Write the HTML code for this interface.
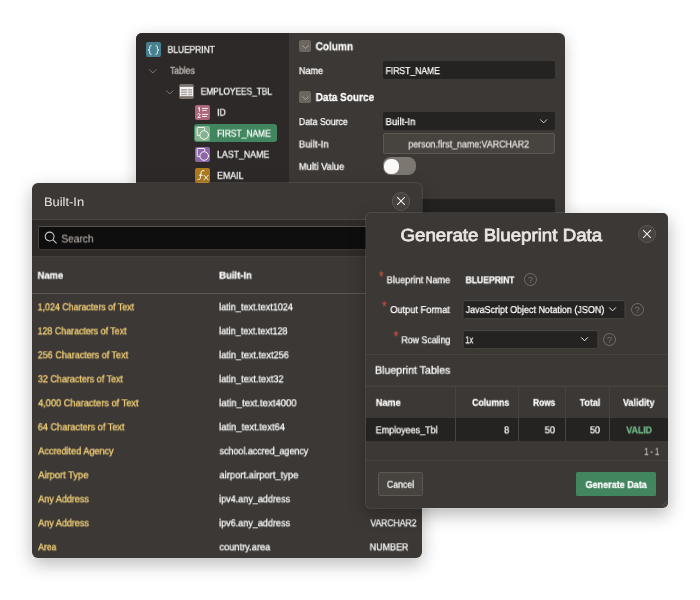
<!DOCTYPE html>
<html lang="en"><head><meta charset="utf-8"><title>Blueprint</title>
<style>
html,body{margin:0;padding:0;background:#fff;}
body{width:700px;height:600px;overflow:hidden;font-family:"Liberation Sans",sans-serif;}
#stage{position:relative;width:700px;height:600px;overflow:hidden;background:#fff;}
#stage *{box-sizing:border-box;}
.t{-webkit-text-stroke-color:currentColor;position:absolute;will-change:transform;text-rendering:geometricPrecision;white-space:nowrap;line-height:20px;height:20px;transform-origin:0 0;font-family:"Liberation Sans",sans-serif;}
.a{position:absolute;}
.panel{position:absolute;background:#3c3835;border-radius:6px;}
#back{left:136px;top:33px;width:429px;height:300px;box-shadow:0 4px 16px rgba(0,0,0,.22);}
#bi{left:32px;top:183px;width:390px;height:374.5px;box-shadow:0 0 0 1px rgba(255,255,255,.10),0 6px 18px rgba(0,0,0,.28);}
#gen{border-radius:5px;left:366px;top:213px;width:302.3px;height:295px;box-shadow:0 0 0 1px rgba(255,255,255,.11),0 6px 18px rgba(0,0,0,.30);}
svg{position:absolute;overflow:visible;}
.f{will-change:transform;}

</style></head>
<body>
<div id="stage">
<div class="panel" id="back"></div>
<div class="a" style="left:136px;top:33px;width:153px;height:300px;background:#2d2928;border-radius:6px 0 0 6px;"></div>
<!-- tree icons -->
<div class="a" style="left:146px;top:42px;width:15px;height:15px;background:#47808f;border-radius:2px;"></div>
<svg style="left:146px;top:42px" width="15" height="15" viewBox="0 0 15 15" fill="none" stroke="#fff" stroke-width="0.95" stroke-linecap="round" stroke-linejoin="round"><path d="M5.2 3.7 C3.9 3.7 3.7 4.2 3.7 5 V6.6 C3.7 7.4 3.2 7.9 2.2 8 C3.2 8.1 3.7 8.6 3.7 9.4 V11 C3.7 11.8 3.9 12.3 5.2 12.3"/><path d="M9.9 3.7 C11.2 3.7 11.4 4.2 11.4 5 V6.6 C11.4 7.4 11.9 7.9 12.9 8 C11.9 8.1 11.4 8.6 11.4 9.4 V11 C11.4 11.8 11.2 12.3 9.9 12.3"/></svg>
<svg style="left:149px;top:68.5px" width="8" height="5" viewBox="0 0 8 5" fill="none" stroke="#7f7a76" stroke-width="1"><path d="M0.3 0.5 L3.8 4 L7.3 0.5"/></svg>
<svg style="left:165.5px;top:89.5px" width="8" height="5" viewBox="0 0 8 5" fill="none" stroke="#7f7a76" stroke-width="1"><path d="M0.3 0.5 L3.8 4 L7.3 0.5"/></svg>
<div class="a" style="left:179px;top:84px;width:15px;height:15px;background:#7a726d;border-radius:2px;"></div>
<svg style="left:179px;top:84px" width="15" height="15" viewBox="0 0 15 15" fill="none" stroke="#fbf9f7" stroke-width="0.9"><rect x="1.5" y="3.3" width="12" height="8.4" fill="rgba(255,255,255,0.38)"/><path d="M1.5 4.1 H13.5" stroke-width="1.7"/><path d="M1.5 7 H13.5 M1.5 9.4 H13.5 M8.6 4.5 V11.7" stroke-width="0.8"/></svg>
<div class="a" style="left:195px;top:105px;width:15px;height:15px;background:#ab667a;border-radius:2px;"></div>
<svg style="left:195px;top:105px" width="15" height="15" viewBox="0 0 15 15" fill="none" stroke="#fff" stroke-width="0.9"><path d="M7.1 3.4 H13.1 M7.1 5.4 H11.8 M7.1 9.4 H13.1 M7.1 11.5 H11.8"/><path d="M2.9 3.3 L4.4 2.4 V6.6" stroke-width="0.95"/><path d="M2.5 9.6 C2.7 8.4 5.3 8.3 5.2 9.8 C5.1 10.8 3.4 11.4 2.6 12.5 H5.6" stroke-width="0.85"/></svg>
<div class="a" style="left:194px;top:124px;width:83px;height:18px;background:#42865f;border-radius:3px;"></div>
<div class="a" style="left:195px;top:126px;width:15px;height:15px;background:#86b292;border-radius:2px;"></div>
<svg style="left:195px;top:126px" width="15" height="15" viewBox="0 0 15 15" fill="none" stroke="#fff" stroke-width="0.9" stroke-linecap="round"><path d="M4.4 9.6 H2.9 Q2.2 9.6 2.2 8.9 V2.2 Q2.2 1.5 2.9 1.5 H9 Q9.7 1.5 9.7 2.2 V3.6"/><circle cx="9.2" cy="9" r="4.3"/></svg>
<div class="a" style="left:195px;top:147px;width:15px;height:15px;background:#8d66a7;border-radius:2px;"></div>
<svg style="left:195px;top:147px" width="15" height="15" viewBox="0 0 15 15" fill="none" stroke="#fff" stroke-width="0.9" stroke-linecap="round"><path d="M4.4 9.6 H2.9 Q2.2 9.6 2.2 8.9 V2.2 Q2.2 1.5 2.9 1.5 H9 Q9.7 1.5 9.7 2.2 V3.6"/><circle cx="9.2" cy="9" r="4.3"/></svg>
<div class="a" style="left:195px;top:168px;width:15px;height:15px;background:#ad7b1d;border-radius:2px;"></div>
<svg style="left:195px;top:168px" width="15" height="15" viewBox="0 0 15 15" fill="none" stroke="#fff" stroke-width="0.95" stroke-linecap="round"><path d="M9 2.7 C7.2 2.1 6.4 3 6.1 4.6 L5.3 10 C5.1 11.3 4.4 11.9 2.8 11.4"/><path d="M4.3 7.2 H7.3"/><path d="M9 7.3 L13.2 11.9 M13.2 7.3 L9 11.9"/></svg>
<!-- property editor -->
<div class="a" style="left:299px;top:40px;width:12px;height:12px;background:#6c6661;border-radius:2px;"></div>
<svg style="left:301.6px;top:44.6px" width="7" height="4" viewBox="0 0 7 4" fill="none" stroke="#aba7a3" stroke-width="0.9"><path d="M0.3 0.4 L3.5 3.5 L6.7 0.4"/></svg>
<div class="a" style="left:299px;top:91px;width:12px;height:12px;background:#6c6661;border-radius:2px;"></div>
<svg style="left:301.6px;top:95.6px" width="7" height="4" viewBox="0 0 7 4" fill="none" stroke="#aba7a3" stroke-width="0.9"><path d="M0.3 0.4 L3.5 3.5 L6.7 0.4"/></svg>
<div class="a" style="left:383px;top:61px;width:172px;height:18px;background:#252321;border-radius:2px;"></div>
<div class="a" style="left:383px;top:112px;width:172px;height:18px;background:#252321;border-radius:2px;"></div>
<svg style="left:539.7px;top:118.8px" width="8" height="5" viewBox="0 0 8 5" fill="none" stroke="#e4e1de" stroke-width="0.9"><path d="M0.2 0.4 L3.6 3.9 L7 0.4"/></svg>
<div class="a" style="left:383px;top:133.3px;width:172px;height:20.4px;background:#47433f;border:1px solid #5b5753;border-radius:2px;"></div>
<div class="a" style="left:383px;top:157px;width:33px;height:18px;background:#7d7772;border-radius:8px;"></div>
<div class="a" style="left:384px;top:158.6px;width:15.4px;height:15px;background:#fbf9f8;border-radius:6.5px;"></div>
<div class="a" style="left:383px;top:199px;width:172px;height:18px;background:#252321;border-radius:2px;"></div>

<span class="t" id="t0" style="left:167px;top:40px;font-size:10px;font-weight:400;color:#ffffff;-webkit-text-stroke-width:0.26px;transform:translate(0.64px,0.80px) scaleX(0.8410);">BLUEPRINT</span>
<span class="t" id="t1" style="left:169px;top:61px;font-size:10px;font-weight:400;color:#c9c5c1;-webkit-text-stroke-width:0.26px;transform:translate(0.97px,0.70px) scaleX(0.8580);">Tables</span>
<span class="t" id="t2" style="left:200px;top:82px;font-size:10px;font-weight:400;color:#ffffff;-webkit-text-stroke-width:0.26px;transform:translate(0.75px,0.60px) scaleX(0.8325);">EMPLOYEES_TBL</span>
<span class="t" id="t3" style="left:217px;top:103px;font-size:10px;font-weight:400;color:#ffffff;-webkit-text-stroke-width:0.26px;transform:translate(0.13px,0.60px) scaleX(0.8566);">ID</span>
<span class="t" id="t4" style="left:217px;top:124px;font-size:10px;font-weight:400;color:#ffffff;-webkit-text-stroke-width:0.26px;transform:translate(0.14px,0.60px) scaleX(0.8465);">FIRST_NAME</span>
<span class="t" id="t5" style="left:217px;top:145px;font-size:10px;font-weight:400;color:#ffffff;-webkit-text-stroke-width:0.26px;transform:translate(0.11px,0.60px) scaleX(0.8771);">LAST_NAME</span>
<span class="t" id="t6" style="left:217px;top:166px;font-size:10px;font-weight:400;color:#ffffff;-webkit-text-stroke-width:0.26px;transform:translate(0.12px,0.70px) scaleX(0.8765);">EMAIL</span>
<span class="t" id="t7" style="left:315px;top:37px;font-size:11.5px;font-weight:700;color:#ffffff;-webkit-text-stroke-width:0.25px;transform:translate(0.59px,0.20px) scaleX(0.8762);">Column</span>
<span class="t" id="t8" style="left:298px;top:62px;font-size:10px;font-weight:400;color:#ffffff;-webkit-text-stroke-width:0.26px;transform:translate(0.89px,0.00px) scaleX(0.9102);">Name</span>
<span class="t" id="t9" style="left:385px;top:62px;font-size:10px;font-weight:400;color:#ffffff;-webkit-text-stroke-width:0.26px;transform:translate(0.63px,0.00px) scaleX(0.8561);">FIRST_NAME</span>
<span class="t" id="t10" style="left:315px;top:88px;font-size:11.5px;font-weight:700;color:#ffffff;-webkit-text-stroke-width:0.25px;transform:translate(0.67px,0.00px) scaleX(0.8714);">Data Source</span>
<span class="t" id="t11" style="left:298px;top:113px;font-size:10px;font-weight:400;color:#ffffff;-webkit-text-stroke-width:0.26px;transform:translate(0.91px,0.00px) scaleX(0.8787);">Data Source</span>
<span class="t" id="t12" style="left:385px;top:113px;font-size:10px;font-weight:400;color:#ffffff;-webkit-text-stroke-width:0.26px;transform:translate(0.55px,0.00px) scaleX(0.9604);">Built-In</span>
<span class="t" id="t13" style="left:298px;top:135px;font-size:10px;font-weight:400;color:#ffffff;-webkit-text-stroke-width:0.26px;transform:translate(0.85px,0.50px) scaleX(0.9570);">Built-In</span>
<span class="t" id="t14" style="left:408px;top:135px;font-size:10px;font-weight:400;color:#e6e3e0;-webkit-text-stroke-width:0.26px;transform:translate(0.35px,0.50px) scaleX(0.8841);">person.first_name:VARCHAR2</span>
<span class="t" id="t15" style="left:298px;top:157px;font-size:10px;font-weight:400;color:#ffffff;-webkit-text-stroke-width:0.26px;transform:translate(0.87px,0.80px) scaleX(0.9298);">Multi Value</span>
<div class="panel" id="bi"></div>
<div class="a" style="left:32px;top:220px;width:390px;height:36px;background:#2e2b28;"></div>
<div class="a" style="left:32px;top:219px;width:390px;height:1px;background:#4a4643;"></div>
<div class="a" style="left:32px;top:256px;width:390px;height:1px;background:#433f3b;"></div>
<div class="a" style="left:38px;top:226px;width:378px;height:24px;background:#0f0e0e;border:1px solid #484440;border-top-color:#55514d;border-bottom-color:#3b3734;border-radius:2px;"></div>
<svg style="left:43.6px;top:231px" width="15" height="14" viewBox="0 0 15 14" fill="none" stroke="#d0ccc8" stroke-width="1.05"><circle cx="5.6" cy="5.5" r="4.4"/><path d="M8.8 8.7 L12.6 12.4"/></svg>
<div class="a" style="left:32px;top:293px;width:390px;height:1px;background:#5c5854;"></div>
<div class="a" style="left:392px;top:192.3px;width:18.4px;height:18.4px;background:#47433f;border:1px solid #5d5955;border-radius:50%;"></div>
<svg style="left:397.1px;top:197.4px" width="8" height="8" viewBox="0 0 8 8" fill="none" stroke="#f3f1ef" stroke-width="1.1"><path d="M0.2 0.2 L7.8 7.8 M7.8 0.2 L0.2 7.8"/></svg>

<span class="t" id="t16" style="left:43px;top:192px;font-size:12.3px;font-weight:400;color:#e2dfdc;-webkit-text-stroke-width:0.05px;transform:translate(0.89px,0.00px) scaleX(1.0511);">Built-In</span>
<span class="t" id="t17" style="left:61px;top:229px;font-size:11px;font-weight:400;color:#b6b2ae;-webkit-text-stroke-width:0.1px;transform:translate(0.38px,0.40px) scaleX(0.9206);">Search</span>
<span class="t" id="t18" style="left:37px;top:266px;font-size:10px;font-weight:700;color:#ffffff;-webkit-text-stroke-width:0.25px;transform:translate(0.61px,0.60px) scaleX(0.9369);">Name</span>
<span class="t" id="t19" style="left:219px;top:266px;font-size:10px;font-weight:700;color:#ffffff;-webkit-text-stroke-width:0.25px;transform:translate(0.11px,0.60px) scaleX(0.9512);">Built-In</span>
<span class="t" id="t20" style="left:37px;top:298px;font-size:10px;font-weight:400;color:#f6d37a;-webkit-text-stroke-width:0.32px;transform:translate(0.65px,0.30px) scaleX(0.8860);">1,024 Characters of Text</span>
<span class="t" id="t21" style="left:219px;top:298px;font-size:10px;font-weight:400;color:#ffffff;-webkit-text-stroke-width:0.26px;transform:translate(0.13px,0.30px) scaleX(0.9092);">latin_text.text1024</span>
<span class="t" id="t22" style="left:37px;top:322px;font-size:10px;font-weight:400;color:#f6d37a;-webkit-text-stroke-width:0.32px;transform:translate(0.65px,0.30px) scaleX(0.8849);">128 Characters of Text</span>
<span class="t" id="t23" style="left:219px;top:322px;font-size:10px;font-weight:400;color:#ffffff;-webkit-text-stroke-width:0.26px;transform:translate(0.13px,0.30px) scaleX(0.9051);">latin_text.text128</span>
<span class="t" id="t24" style="left:37px;top:346px;font-size:10px;font-weight:400;color:#f6d37a;-webkit-text-stroke-width:0.32px;transform:translate(0.78px,0.30px) scaleX(0.8985);">256 Characters of Text</span>
<span class="t" id="t25" style="left:219px;top:346px;font-size:10px;font-weight:400;color:#ffffff;-webkit-text-stroke-width:0.26px;transform:translate(0.12px,0.30px) scaleX(0.9226);">latin_text.text256</span>
<span class="t" id="t26" style="left:37px;top:370px;font-size:10px;font-weight:400;color:#f6d37a;-webkit-text-stroke-width:0.32px;transform:translate(0.92px,0.30px) scaleX(0.8969);">32 Characters of Text</span>
<span class="t" id="t27" style="left:219px;top:370px;font-size:10px;font-weight:400;color:#ffffff;-webkit-text-stroke-width:0.26px;transform:translate(0.13px,0.30px) scaleX(0.9187);">latin_text.text32</span>
<span class="t" id="t28" style="left:38px;top:394px;font-size:10px;font-weight:400;color:#f6d37a;-webkit-text-stroke-width:0.32px;transform:translate(0.06px,0.30px) scaleX(0.9235);">4,000 Characters of Text</span>
<span class="t" id="t29" style="left:219px;top:394px;font-size:10px;font-weight:400;color:#ffffff;-webkit-text-stroke-width:0.26px;transform:translate(0.10px,0.30px) scaleX(0.9553);">latin_text.text4000</span>
<span class="t" id="t30" style="left:37px;top:418px;font-size:10px;font-weight:400;color:#f6d37a;-webkit-text-stroke-width:0.32px;transform:translate(0.77px,0.30px) scaleX(0.9143);">64 Characters of Text</span>
<span class="t" id="t31" style="left:219px;top:418px;font-size:10px;font-weight:400;color:#ffffff;-webkit-text-stroke-width:0.26px;transform:translate(0.11px,0.30px) scaleX(0.9397);">latin_text.text64</span>
<span class="t" id="t32" style="left:38px;top:442px;font-size:10px;font-weight:400;color:#f6d37a;-webkit-text-stroke-width:0.32px;transform:translate(0.20px,0.30px) scaleX(0.9115);">Accredited Agency</span>
<span class="t" id="t33" style="left:219px;top:442px;font-size:10px;font-weight:400;color:#ffffff;-webkit-text-stroke-width:0.26px;transform:translate(0.56px,0.30px) scaleX(0.8908);">school.accred_agency</span>
<span class="t" id="t34" style="left:38px;top:466px;font-size:10px;font-weight:400;color:#f6d37a;-webkit-text-stroke-width:0.32px;transform:translate(0.20px,0.30px) scaleX(0.9345);">Airport Type</span>
<span class="t" id="t35" style="left:219px;top:466px;font-size:10px;font-weight:400;color:#ffffff;-webkit-text-stroke-width:0.26px;transform:translate(0.41px,0.30px) scaleX(0.9422);">airport.airport_type</span>
<span class="t" id="t36" style="left:38px;top:490px;font-size:10px;font-weight:400;color:#f6d37a;-webkit-text-stroke-width:0.32px;transform:translate(0.20px,0.30px) scaleX(0.9010);">Any Address</span>
<span class="t" id="t37" style="left:219px;top:490px;font-size:10px;font-weight:400;color:#ffffff;-webkit-text-stroke-width:0.26px;transform:translate(0.14px,0.30px) scaleX(0.9039);">ipv4.any_address</span>
<span class="t" id="t38" style="left:38px;top:514px;font-size:10px;font-weight:400;color:#f6d37a;-webkit-text-stroke-width:0.32px;transform:translate(0.20px,0.30px) scaleX(0.9010);">Any Address</span>
<span class="t" id="t39" style="left:219px;top:514px;font-size:10px;font-weight:400;color:#ffffff;-webkit-text-stroke-width:0.26px;transform:translate(0.14px,0.30px) scaleX(0.9039);">ipv6.any_address</span>
<span class="t" id="t40" style="left:370px;top:514px;font-size:10px;font-weight:400;color:#ffffff;-webkit-text-stroke-width:0.26px;transform:translate(0.40px,0.30px) scaleX(0.8554);">VARCHAR2</span>
<span class="t" id="t41" style="left:38px;top:538px;font-size:10px;font-weight:400;color:#f6d37a;-webkit-text-stroke-width:0.32px;transform:translate(0.20px,0.30px) scaleX(0.8590);">Area</span>
<span class="t" id="t42" style="left:219px;top:538px;font-size:10px;font-weight:400;color:#ffffff;-webkit-text-stroke-width:0.26px;transform:translate(0.41px,0.30px) scaleX(0.9268);">country.area</span>
<span class="t" id="t43" style="left:369px;top:538px;font-size:10px;font-weight:400;color:#ffffff;-webkit-text-stroke-width:0.26px;transform:translate(0.70px,0.30px) scaleX(0.8932);">NUMBER</span>
<div class="panel" id="gen"></div>
<div class="a" style="left:638px;top:225.1px;width:18.4px;height:18.4px;background:#47433f;border:1px solid #5d5955;border-radius:50%;"></div>
<svg style="left:643.2px;top:230.3px" width="8" height="8" viewBox="0 0 8 8" fill="none" stroke="#f3f1ef" stroke-width="1.1"><path d="M0.2 0.2 L7.8 7.8 M7.8 0.2 L0.2 7.8"/></svg>
<div class="a" style="left:523.9px;top:273px;width:13.2px;height:13.2px;border:1px solid #726d69;border-radius:50%;"></div>
<div class="a" style="left:630.6px;top:303px;width:13.2px;height:13.2px;border:1px solid #726d69;border-radius:50%;"></div>
<div class="a" style="left:603.2px;top:332.8px;width:13.2px;height:13.2px;border:1px solid #726d69;border-radius:50%;"></div>
<div class="a f" style="left:462px;top:300px;width:163px;height:19px;background:#252321;border:1px solid #4a4642;border-radius:2.5px;transform:translate(0.5px,0.15px);"></div>
<svg style="left:609px;top:307.1px" width="8" height="5" viewBox="0 0 8 5" fill="none" stroke="#efedeb" stroke-width="1"><path d="M0.2 0.4 L3.55 3.8 L6.9 0.4"/></svg>
<div class="a f" style="left:462px;top:330px;width:135.5px;height:19px;background:#252321;border:1px solid #4a4642;border-radius:2.5px;transform:translate(0.5px,0.15px);"></div>
<svg style="left:581.3px;top:337.2px" width="8" height="5" viewBox="0 0 8 5" fill="none" stroke="#efedeb" stroke-width="1"><path d="M0.2 0.4 L3.55 3.8 L6.9 0.4"/></svg>
<div class="a" style="left:366px;top:354px;width:302.3px;height:1px;background:#47433f;"></div>
<div class="a f" style="left:366px;top:385px;width:302.3px;height:1px;background:#4d4945;transform:translateY(0.6px);"></div>
<div class="a" style="left:366px;top:418px;width:302.3px;height:23px;background:#252321;"></div>
<div class="a" style="left:455px;top:386px;width:1px;height:55px;background:#47433f;"></div>
<div class="a" style="left:518.3px;top:386px;width:1px;height:55px;background:#47433f;"></div>
<div class="a" style="left:564.8px;top:386px;width:1px;height:55px;background:#47433f;"></div>
<div class="a" style="left:609.3px;top:386px;width:1px;height:55px;background:#47433f;"></div>
<div class="a" style="left:366px;top:460px;width:302.3px;height:1px;background:#47433f;"></div>
<div class="a" style="left:378px;top:472px;width:45px;height:24px;background:#47433f;border:1px solid #5b5753;border-radius:2px;"></div>
<div class="a" style="left:576px;top:472px;width:80px;height:24px;background:#42865f;border-radius:1.5px;"></div>
<svg style="left:658px;top:498px" width="10" height="10" viewBox="0 0 10 10" fill="none" stroke="#5f5b57" stroke-width="0.9"><path d="M3.6 8.6 L9 3.2 M6.4 8.8 L9.2 6"/></svg>

<span class="t" id="t44" style="left:400px;top:225px;font-size:17.5px;font-weight:400;color:#e9e6e3;-webkit-text-stroke-width:0.75px;transform:translate(0.42px,0.10px) scaleX(1.0691);">Generate Blueprint Data</span>
<span class="t" id="t45" style="left:386px;top:271px;font-size:10px;font-weight:400;color:#ffffff;-webkit-text-stroke-width:0.26px;transform:translate(0.68px,0.20px) scaleX(0.9227);">Blueprint Name</span>
<span class="t" id="t46" style="left:465px;top:271px;font-size:10px;font-weight:700;color:#ffffff;-webkit-text-stroke-width:0.25px;transform:translate(0.57px,0.20px) scaleX(0.8554);">BLUEPRINT</span>
<span class="t" id="t47" style="left:390px;top:301px;font-size:10px;font-weight:400;color:#ffffff;-webkit-text-stroke-width:0.26px;transform:translate(0.27px,0.00px) scaleX(0.9230);">Output Format</span>
<span class="t" id="t48" style="left:465px;top:301px;font-size:10px;font-weight:400;color:#ffffff;-webkit-text-stroke-width:0.26px;transform:translate(0.66px,0.00px) scaleX(0.8971);">JavaScript Object Notation (JSON)</span>
<span class="t" id="t49" style="left:401px;top:331px;font-size:10px;font-weight:400;color:#ffffff;-webkit-text-stroke-width:0.26px;transform:translate(0.41px,0.20px) scaleX(0.8795);">Row Scaling</span>
<span class="t" id="t50" style="left:465px;top:331px;font-size:10px;font-weight:400;color:#ffffff;-webkit-text-stroke-width:0.26px;transform:translate(0.33px,0.20px) scaleX(0.7447);">1x</span>
<span class="t" id="t51" style="left:374px;top:360px;font-size:11px;font-weight:400;color:#ffffff;-webkit-text-stroke-width:0.26px;transform:translate(0.97px,0.70px) scaleX(0.9654);">Blueprint Tables</span>
<span class="t" id="t52" style="left:375px;top:393px;font-size:10px;font-weight:700;color:#ffffff;-webkit-text-stroke-width:0.25px;transform:translate(0.83px,0.80px) scaleX(0.9104);">Name</span>
<span class="t" id="t53" style="left:472px;top:393px;font-size:10px;font-weight:700;color:#ffffff;-webkit-text-stroke-width:0.25px;transform:translate(0.23px,0.80px) scaleX(0.8630);">Columns</span>
<span class="t" id="t54" style="left:533px;top:393px;font-size:10px;font-weight:700;color:#ffffff;-webkit-text-stroke-width:0.25px;transform:translate(0.08px,0.80px) scaleX(0.8307);">Rows</span>
<span class="t" id="t55" style="left:579px;top:393px;font-size:10px;font-weight:700;color:#ffffff;-webkit-text-stroke-width:0.25px;transform:translate(0.70px,0.80px) scaleX(0.8912);">Total</span>
<span class="t" id="t56" style="left:622px;top:393px;font-size:10px;font-weight:700;color:#ffffff;-webkit-text-stroke-width:0.25px;transform:translate(0.90px,0.80px) scaleX(0.9008);">Validity</span>
<span class="t" id="t57" style="left:375px;top:421px;font-size:10px;font-weight:400;color:#ffffff;-webkit-text-stroke-width:0.26px;transform:translate(0.70px,0.30px) scaleX(0.8966);">Employees_Tbl</span>
<span class="t" id="t58" style="left:504px;top:421px;font-size:10px;font-weight:400;color:#ffffff;-webkit-text-stroke-width:0.26px;transform:translate(0.12px,0.30px) scaleX(0.9084);">8</span>
<span class="t" id="t59" style="left:544px;top:421px;font-size:10px;font-weight:400;color:#ffffff;-webkit-text-stroke-width:0.26px;transform:translate(0.71px,0.30px) scaleX(0.9374);">50</span>
<span class="t" id="t60" style="left:589px;top:421px;font-size:10px;font-weight:400;color:#ffffff;-webkit-text-stroke-width:0.26px;transform:translate(0.92px,0.30px) scaleX(0.9090);">50</span>
<span class="t" id="t61" style="left:626px;top:421px;font-size:10px;font-weight:700;color:#74b98a;-webkit-text-stroke-width:0.25px;transform:translate(0.30px,0.30px) scaleX(0.8751);">VALID</span>
<span class="t" id="t62" style="left:644px;top:442px;font-size:10px;font-weight:400;color:#c5c1bd;-webkit-text-stroke-width:0.26px;transform:translate(0.34px,0.70px) scaleX(0.7376);">1 - 1</span>
<span class="t" id="t63" style="left:386px;top:475px;font-size:10px;font-weight:400;color:#ffffff;-webkit-text-stroke-width:0.26px;transform:translate(0.89px,0.70px) scaleX(0.8767);">Cancel</span>
<span class="t" id="t64" style="left:585px;top:475px;font-size:10px;font-weight:700;color:#ffffff;-webkit-text-stroke-width:0.25px;transform:translate(0.52px,0.90px) scaleX(0.9029);">Generate Data</span>
<span class="t" id="t65" style="left:378px;top:267px;font-size:15px;font-weight:400;color:#d8553f;-webkit-text-stroke-width:0px;transform:translate(0.80px,0.40px) scaleX(0.8348);">*</span>
<span class="t" id="t66" style="left:382px;top:297px;font-size:15px;font-weight:400;color:#d8553f;-webkit-text-stroke-width:0px;transform:translate(0.00px,0.40px) scaleX(0.8348);">*</span>
<span class="t" id="t67" style="left:393px;top:327px;font-size:15px;font-weight:400;color:#d8553f;-webkit-text-stroke-width:0px;transform:translate(0.60px,0.30px) scaleX(0.8348);">*</span>
<span class="t" id="t68" style="left:528px;top:270px;font-size:8.8px;font-weight:400;color:#7b7672;-webkit-text-stroke-width:0px;transform:translate(0.02px,0.00px) scaleX(1.0227);">?</span>
<span class="t" id="t69" style="left:634px;top:300px;font-size:8.8px;font-weight:400;color:#7b7672;-webkit-text-stroke-width:0px;transform:translate(0.72px,0.00px) scaleX(1.0227);">?</span>
<span class="t" id="t70" style="left:607px;top:329px;font-size:8.8px;font-weight:400;color:#7b7672;-webkit-text-stroke-width:0px;transform:translate(0.02px,0.90px) scaleX(1.0227);">?</span>
</div>
</body></html>
